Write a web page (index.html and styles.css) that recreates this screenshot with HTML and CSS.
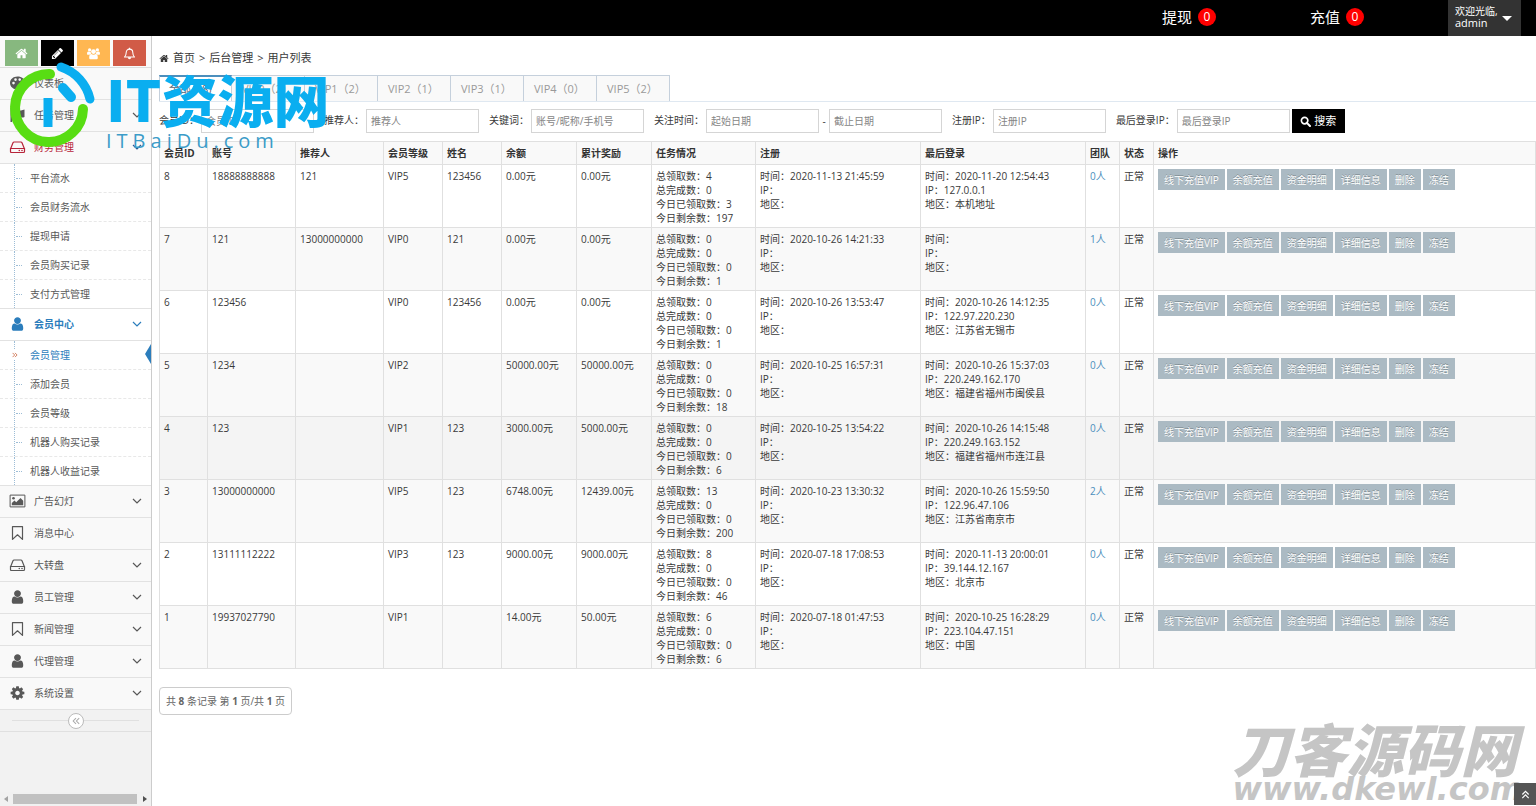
FILE: index.html
```html
<!DOCTYPE html>
<html lang="zh-CN">
<head>
<meta charset="utf-8">
<title>用户列表</title>
<link rel="stylesheet" href="styles.css">
</head>
<body>
<svg class="sprite" aria-hidden="true">
  <symbol id="home" viewBox="0 0 1792 1792"><path d="M1472 992v480q0 26-19 45t-45 19h-384v-384h-256v384h-384q-26 0-45-19t-19-45v-480q0-1 .5-3t.5-3l575-474 575 474q1 2 1 6zm223-69l-62 74q-8 9-21 11h-3q-13 0-21-7l-692-577-692 577q-12 8-24 7-13-2-21-11l-62-74q-8-10-7-23.5t11-21.5l719-599q32-26 76-26t76 26l244 204v-195q0-14 9-23t23-9h192q14 0 23 9t9 23v408l219 182q10 8 11 21.5t-7 23.5z"/></symbol>
  <symbol id="pencil" viewBox="0 0 1792 1792"><path d="M491 1536l91-91-235-235-91 91v107h128v128h107zm523-928q0-22-22-22-10 0-17 7l-542 542q-7 7-7 17 0 22 22 22 10 0 17-7l542-542q7-7 7-17zm-54-192l416 416-832 832h-416v-416zm683 96q0 53-37 90l-166 166-416-416 166-165q36-38 90-38 53 0 91 38l235 234q37 39 37 91z"/></symbol>
  <symbol id="users" viewBox="0 0 16 16"><circle cx="3.2" cy="3.6" r="2"/><circle cx="12.8" cy="3.6" r="2"/><circle cx="8" cy="5.6" r="2.9"/><path d="M0 8.5C0 6.500.8 5.600 1.600 5.600c1 .7 2 .6 2.900.4.100 1.100.400 1.600.8 2.200-.9.100-1.700.500-2.200 1.200H1.300C.4 9.400 0 9.200 0 8.500zM16 8.500c0-2-.8-2.900-1.600-2.900-1 .7-2 .6-2.900.4-.100 1.100-.400 1.600-.8 2.200.9.100 1.700.500 2.200 1.200h1.800c.9 0 1.300-.2 1.300-.9zM2.700 13.200c0-2.700.8-4.400 2.600-4.500 1.700 1.300 3.700 1.300 5.400 0 1.800.1 2.600 1.800 2.600 4.500 0 1.200-.8 1.900-1.900 1.900H4.600c-1.100 0-1.900-.7-1.900-1.900z"/></symbol>
  <symbol id="bell" viewBox="0 0 16 16"><path d="M1.800 12.400C3.700 10.700 4 8.500 4 6.600 4 4.300 5.600 2.600 8 2.600s4 1.700 4 4c0 1.900.3 4.100 2.200 5.800z" fill="none" stroke="currentColor" stroke-width="1.300" stroke-linejoin="round"/><path d="M7.200 1h1.600v2H7.200zM6 12.600h4c0 1.500-.9 2.400-2 2.400s-2-.9-2-2.400z"/></symbol>
  <symbol id="palette" viewBox="0 0 16 16"><path fill-rule="evenodd" d="M8 1.500c4.300 0 7.500 2.500 7.500 5.800 0 2.200-1.500 3.300-3.300 3.300-1.900 0-2.900.3-2.500 1.600.5 1.400-.2 2.300-1.700 2.300C3.800 14.500.5 11.600.5 8S3.700 1.500 8 1.500zM4 6.800a1.300 1.300 0 100 2.600 1.300 1.300 0 000-2.600zm2-3.500a1.300 1.300 0 100 2.600 1.300 1.300 0 000-2.600zm4.200 0a1.300 1.300 0 100 2.600 1.300 1.300 0 000-2.600zm2.600 2.700a1.200 1.200 0 100 2.400 1.200 1.200 0 000-2.400z"/></symbol>
  <symbol id="flag" viewBox="0 0 16 16"><path d="M1 1h1.500v14H1zM3.500 3c3-2 5 1 8 .5L15 2.500V10c-4 2-6-2-11.500.5z"/></symbol>
  <symbol id="disk" viewBox="0 0 16 16"><path d="M1.200 9.500L3.500 3.700Q3.800 3 4.600 3h6.800q.8 0 1.100.7l2.300 5.800M1 9.500h14v3q0 1-1 1H2q-1 0-1-1z" fill="none" stroke="currentColor" stroke-width="1.200"/><circle cx="9.800" cy="11.500" r=".8"/><circle cx="12.500" cy="11.500" r=".8"/></symbol>
  <symbol id="user" viewBox="0 0 1792 1792"><path d="M1536 1399q0 109-62.500 187t-150.500 78h-854q-88 0-150.500-78t-62.500-187q0-85 8.500-160.500t31.500-152 58.500-131 94-89 134.500-34.500q131 128 313 128t313-128q76 0 134.500 34.500t94 89 58.500 131 31.500 152 8.500 160.500zm-256-887q0 159-112.500 271.500t-271.500 112.500-271.500-112.500-112.500-271.500 112.500-271.500 271.500-112.500 271.500 112.500 112.500 271.500z"/></symbol>
  <symbol id="picture" viewBox="0 0 16 16"><path d="M.6 2.100h14.800v11.800H.6z" fill="none" stroke="currentColor" stroke-width="1"/><circle cx="4" cy="5.300" r="1.300"/><path d="M2.300 12.200V10L5 7.500l1.700 1.700L11 5l2.700 2.700v4.500z"/></symbol>
  <symbol id="bookmark" viewBox="0 0 16 16"><path d="M3 1.600h10v12.800l-5-4.600-5 4.600z" fill="none" stroke="currentColor" stroke-width="1.200" stroke-linejoin="round"/></symbol>
  <symbol id="cog" viewBox="0 0 1792 1792"><path d="M1152 896q0-106-75-181t-181-75-181 75-75 181 75 181 181 75 181-75 75-181zm512-109v222q0 12-8 23t-20 13l-185 28q-19 54-39 91 35 50 107 138 10 12 10 25t-9 23q-27 37-99 108t-94 71q-12 0-26-9l-138-108q-44 23-91 38-16 136-29 186-7 28-36 28h-222q-14 0-24.500-8.500t-11.500-21.500l-28-184q-49-16-90-37l-141 107q-10 9-25 9-14 0-25-11-126-114-165-168-7-10-7-23 0-12 8-23 15-21 51-66.500t54-70.500q-27-50-41-99l-183-27q-13-2-21-12.500t-8-23.500v-222q0-12 8-23t19-13l186-28q14-46 39-92-40-57-107-138-10-12-10-24 0-10 9-23 26-36 98.500-107.500t94.500-71.500q13 0 26 10l138 107q44-23 91-38 16-136 29-186 7-28 36-28h222q14 0 24.500 8.500t11.500 21.500l28 184q49 16 90 37l142-107q9-9 24-9 13 0 25 10 129 119 165 170 7 8 7 22 0 12-8 23-15 21-51 66.500t-54 70.500q26 50 41 98l183 28q13 2 21 12.500t8 23.500z"/></symbol>
  <symbol id="down" viewBox="0 0 10 10"><path d="M1 3l4 4 4-4" fill="none" stroke="currentColor" stroke-width="1.200"/></symbol>
  <symbol id="double" viewBox="0 0 10 10"><path d="M1 1.500L4.500 5 1 8.500M5 1.500L8.500 5 5 8.500" fill="none" stroke="currentColor" stroke-width="1.300"/></symbol>
  <symbol id="search" viewBox="0 0 16 16"><circle cx="6.700" cy="6.700" r="4.700" fill="none" stroke="currentColor" stroke-width="2.400"/><path d="M10 10l4.500 4.500" stroke="currentColor" stroke-width="3" stroke-linecap="round"/></symbol>
</svg>

<header class="topbar">
  <a class="top-link withdraw" href="#">提现 <span class="count">0</span></a>
  <a class="top-link recharge" href="#">充值 <span class="count">0</span></a>
  <button class="account" type="button"><span class="welcome"><small>欢迎光临,</small>admin</span><span class="caret"></span></button>
</header>

<div class="layout">
  <aside class="sidebar">
    <div class="shortcuts">
      <button class="green" type="button" aria-label="首页"><svg><use href="#home"/></svg></button>
      <button class="black" type="button" aria-label="编辑"><svg><use href="#pencil"/></svg></button>
      <button class="orange" type="button" aria-label="会员"><svg><use href="#users"/></svg></button>
      <button class="red" type="button" aria-label="通知"><svg><use href="#bell"/></svg></button>
    </div>
    <nav>
      <a class="item" href="#"><svg class="ico"><use href="#palette"/></svg><span>仪表板</span></a>
      <a class="item" href="#"><svg class="ico"><use href="#flag"/></svg><span>任务管理</span><svg class="chev"><use href="#down"/></svg></a>
      <a class="item finance" href="#"><svg class="ico"><use href="#disk"/></svg><span>财务管理</span><svg class="chev"><use href="#down"/></svg></a>
      <div class="submenu">
        <a href="#">平台流水</a>
        <a href="#">会员财务流水</a>
        <a href="#">提现申请</a>
        <a href="#">会员购买记录</a>
        <a href="#">支付方式管理</a>
      </div>
      <a class="item open" href="#"><svg class="ico"><use href="#user"/></svg><span>会员中心</span><svg class="chev"><use href="#down"/></svg></a>
      <div class="submenu">
        <a class="current" href="#"><svg class="mark"><use href="#double"/></svg>会员管理</a>
        <a href="#">添加会员</a>
        <a href="#">会员等级</a>
        <a href="#">机器人购买记录</a>
        <a href="#">机器人收益记录</a>
      </div>
      <a class="item" href="#"><svg class="ico"><use href="#picture"/></svg><span>广告幻灯</span><svg class="chev"><use href="#down"/></svg></a>
      <a class="item" href="#"><svg class="ico"><use href="#bookmark"/></svg><span>消息中心</span></a>
      <a class="item" href="#"><svg class="ico"><use href="#disk"/></svg><span>大转盘</span><svg class="chev"><use href="#down"/></svg></a>
      <a class="item" href="#"><svg class="ico"><use href="#user"/></svg><span>员工管理</span><svg class="chev"><use href="#down"/></svg></a>
      <a class="item" href="#"><svg class="ico"><use href="#bookmark"/></svg><span>新闻管理</span><svg class="chev"><use href="#down"/></svg></a>
      <a class="item" href="#"><svg class="ico"><use href="#user"/></svg><span>代理管理</span><svg class="chev"><use href="#down"/></svg></a>
      <a class="item" href="#"><svg class="ico"><use href="#cog"/></svg><span>系统设置</span><svg class="chev"><use href="#down"/></svg></a>
    </nav>
    <div class="collapse"><button type="button" aria-label="收起菜单"><svg><use href="#double"/></svg></button></div>
    <div class="hscroll"><i class="arrow left"></i><i class="thumb"></i><i class="arrow right"></i></div>
  </aside>

  <main class="content">
    <div class="breadcrumb"><svg><use href="#home"/></svg><a href="#">首页</a><span>&gt;</span><a href="#">后台管理</a><span>&gt;</span><span>用户列表</span></div>
    <div class="tabs">
      <a class="active" href="#">全部（8)</a><a href="#">VIP0（2）</a><a href="#">VIP1（2）</a><a href="#">VIP2（1）</a><a href="#">VIP3（1）</a><a href="#">VIP4（0）</a><a href="#">VIP5（2）</a>
    </div>
    <form class="filters">
      <div class="field"><label for="f-id">会员ID：</label><input id="f-id" type="text" placeholder="会员ID"></div>
      <div class="field"><label for="f-ref">推荐人：</label><input id="f-ref" type="text" placeholder="推荐人"></div>
      <div class="field"><label for="f-key">关键词：</label><input id="f-key" type="text" placeholder="账号/昵称/手机号"></div>
      <div class="field"><label for="f-from">关注时间：</label><input id="f-from" type="text" placeholder="起始日期"><span class="dash">-</span><input type="text" placeholder="截止日期" aria-label="截止日期"></div>
      <div class="field"><label for="f-ip">注册IP：</label><input id="f-ip" type="text" placeholder="注册IP"></div>
      <div class="field"><label for="f-last">最后登录IP：</label><input id="f-last" type="text" placeholder="最后登录IP"><button type="button"><svg><use href="#search"/></svg>搜索</button></div>
    </form>

    <table class="members">
      <colgroup><col class="c-id"><col class="c-account"><col class="c-account"><col class="c-level"><col class="c-name"><col class="c-money"><col class="c-money"><col class="c-task"><col class="c-login"><col class="c-login"><col class="c-team"><col class="c-state"><col></colgroup>
      <thead>
        <tr><th>会员ID</th><th>账号</th><th>推荐人</th><th>会员等级</th><th>姓名</th><th>余额</th><th>累计奖励</th><th>任务情况</th><th>注册</th><th>最后登录</th><th>团队</th><th>状态</th><th>操作</th></tr>
      </thead>
      <tbody>
        <tr><td>8</td><td>18888888888</td><td>121</td><td>VIP5</td><td>123456</td><td>0.00元</td><td>0.00元</td><td>总领取数：4<br>总完成数：0<br>今日已领取数：3<br>今日剩余数：197</td><td>时间：2020-11-13 21:45:59<br>IP：<br>地区：</td><td>时间：2020-11-20 12:54:43<br>IP：127.0.0.1<br>地区：本机地址</td><td><a href="#">0人</a></td><td>正常</td><td><div class="actions"><button type="button">线下充值VIP</button><button type="button">余额充值</button><button type="button">资金明细</button><button type="button">详细信息</button><button type="button">删除</button><button type="button">冻结</button></div></td></tr>
        <tr><td>7</td><td>121</td><td>13000000000</td><td>VIP0</td><td>121</td><td>0.00元</td><td>0.00元</td><td>总领取数：0<br>总完成数：0<br>今日已领取数：0<br>今日剩余数：1</td><td>时间：2020-10-26 14:21:33<br>IP：<br>地区：</td><td>时间：<br>IP：<br>地区：</td><td><a href="#">1人</a></td><td>正常</td><td><div class="actions"><button type="button">线下充值VIP</button><button type="button">余额充值</button><button type="button">资金明细</button><button type="button">详细信息</button><button type="button">删除</button><button type="button">冻结</button></div></td></tr>
        <tr><td>6</td><td>123456</td><td></td><td>VIP0</td><td>123456</td><td>0.00元</td><td>0.00元</td><td>总领取数：0<br>总完成数：0<br>今日已领取数：0<br>今日剩余数：1</td><td>时间：2020-10-26 13:53:47<br>IP：<br>地区：</td><td>时间：2020-10-26 14:12:35<br>IP：122.97.220.230<br>地区：江苏省无锡市</td><td><a href="#">0人</a></td><td>正常</td><td><div class="actions"><button type="button">线下充值VIP</button><button type="button">余额充值</button><button type="button">资金明细</button><button type="button">详细信息</button><button type="button">删除</button><button type="button">冻结</button></div></td></tr>
        <tr><td>5</td><td>1234</td><td></td><td>VIP2</td><td></td><td>50000.00元</td><td>50000.00元</td><td>总领取数：0<br>总完成数：0<br>今日已领取数：0<br>今日剩余数：18</td><td>时间：2020-10-25 16:57:31<br>IP：<br>地区：</td><td>时间：2020-10-26 15:37:03<br>IP：220.249.162.170<br>地区：福建省福州市闽侯县</td><td><a href="#">0人</a></td><td>正常</td><td><div class="actions"><button type="button">线下充值VIP</button><button type="button">余额充值</button><button type="button">资金明细</button><button type="button">详细信息</button><button type="button">删除</button><button type="button">冻结</button></div></td></tr>
        <tr class="hovered"><td>4</td><td>123</td><td></td><td>VIP1</td><td>123</td><td>3000.00元</td><td>5000.00元</td><td>总领取数：0<br>总完成数：0<br>今日已领取数：0<br>今日剩余数：6</td><td>时间：2020-10-25 13:54:22<br>IP：<br>地区：</td><td>时间：2020-10-26 14:15:48<br>IP：220.249.163.152<br>地区：福建省福州市连江县</td><td><a href="#">0人</a></td><td>正常</td><td><div class="actions"><button type="button">线下充值VIP</button><button type="button">余额充值</button><button type="button">资金明细</button><button type="button">详细信息</button><button type="button">删除</button><button type="button">冻结</button></div></td></tr>
        <tr><td>3</td><td>13000000000</td><td></td><td>VIP5</td><td>123</td><td>6748.00元</td><td>12439.00元</td><td>总领取数：13<br>总完成数：0<br>今日已领取数：0<br>今日剩余数：200</td><td>时间：2020-10-23 13:30:32<br>IP：<br>地区：</td><td>时间：2020-10-26 15:59:50<br>IP：122.96.47.106<br>地区：江苏省南京市</td><td><a href="#">2人</a></td><td>正常</td><td><div class="actions"><button type="button">线下充值VIP</button><button type="button">余额充值</button><button type="button">资金明细</button><button type="button">详细信息</button><button type="button">删除</button><button type="button">冻结</button></div></td></tr>
        <tr><td>2</td><td>13111112222</td><td></td><td>VIP3</td><td>123</td><td>9000.00元</td><td>9000.00元</td><td>总领取数：8<br>总完成数：0<br>今日已领取数：0<br>今日剩余数：46</td><td>时间：2020-07-18 17:08:53<br>IP：<br>地区：</td><td>时间：2020-11-13 20:00:01<br>IP：39.144.12.167<br>地区：北京市</td><td><a href="#">0人</a></td><td>正常</td><td><div class="actions"><button type="button">线下充值VIP</button><button type="button">余额充值</button><button type="button">资金明细</button><button type="button">详细信息</button><button type="button">删除</button><button type="button">冻结</button></div></td></tr>
        <tr><td>1</td><td>19937027790</td><td></td><td>VIP1</td><td></td><td>14.00元</td><td>50.00元</td><td>总领取数：6<br>总完成数：0<br>今日已领取数：0<br>今日剩余数：6</td><td>时间：2020-07-18 01:47:53<br>IP：<br>地区：</td><td>时间：2020-10-25 16:28:29<br>IP：223.104.47.151<br>地区：中国</td><td><a href="#">0人</a></td><td>正常</td><td><div class="actions"><button type="button">线下充值VIP</button><button type="button">余额充值</button><button type="button">资金明细</button><button type="button">详细信息</button><button type="button">删除</button><button type="button">冻结</button></div></td></tr>
      </tbody>
    </table>
    <div class="pager">共 <b>8</b> 条记录 第 <b>1</b> 页/共 <b>1</b> 页</div>
  </main>
</div>

<div class="stamp stamp-top">
  <svg viewBox="0 0 100 100">
    <path d="M44 22A34 34 0 1 0 77 57" stroke="#58dd13" stroke-width="10" stroke-linecap="round"/>
    <path d="M55 15A44 44 0 0 1 84 47" stroke="#0aaef0" stroke-width="9" stroke-linecap="round"/>
    <path d="M57 36L65 45" stroke="#0aaef0" stroke-width="10" stroke-linecap="round"/>
    <path d="M42 46v29" stroke="#0aaef0" stroke-width="9"/>
  </svg>
  <div class="stamp-words"><strong>IT资源网</strong><span>ITBaiDu.com</span></div>
</div>
<div class="stamp stamp-bottom"><strong>刀客源码网</strong><span>www.dkewl.com</span></div>
<button class="to-top" type="button" aria-label="回到顶部"><svg><use href="#double"/></svg></button>
</body>
</html>
```

FILE: styles.css
```css
* { box-sizing: border-box; }

body {
  margin: 0;
  min-height: 100vh;
  display: flex;
  flex-direction: column;
  position: relative;
  overflow-x: hidden;
  background: #fff;
  color: #393939;
  font: 10px/14px "Open Sans", "Noto Sans CJK SC", sans-serif;
}

a { color: inherit; text-decoration: none; }
button, input { font: inherit; border: 0; border-radius: 0; padding: 0; }
svg { fill: currentColor; flex: none; }
.sprite { position: absolute; width: 0; height: 0; }

/* Top bar */
.topbar {
  height: 36px;
  display: flex;
  justify-content: flex-end;
  align-items: center;
  padding-right: 15px;
  background: #000;
  color: #fff;
}
.top-link { display: flex; align-items: center; gap: 6px; height: 36px; padding-bottom: 2px; font-size: 15px; }
.withdraw { margin-right: 94px; }
.recharge { margin-right: 84px; }
.count {
  width: 18px;
  height: 18px;
  border-radius: 50%;
  background: #f00;
  font-size: 12px;
  line-height: 18px;
  text-align: center;
}
.account {
  width: 73px;
  height: 36px;
  display: flex;
  align-items: center;
  gap: 4px;
  padding-left: 7px;
  background: #333;
  color: #fff;
  text-align: left;
}
.welcome { padding-bottom: 2px; font-size: 11px; line-height: 12px; white-space: nowrap; }
.welcome small { display: block; font-size: 10px; }
.caret { border: 5px solid transparent; border-top-color: #fff; border-bottom: 0; }

/* Side menu */
.layout { flex: 1; display: flex; }
.sidebar {
  width: 152px;
  flex: none;
  display: flex;
  flex-direction: column;
  border-right: 1px solid #ccc;
  background: #f2f2f2;
  color: #585858;
}
.shortcuts {
  display: flex;
  gap: 3px;
  padding: 4px 5px 1px;
  border-bottom: 1px solid #ddd;
  background: #fafafa;
}
.shortcuts button { flex: 1; height: 26px; display: grid; place-items: center; color: #fff; }
.shortcuts svg { width: 13px; height: 13px; }
.shortcuts .green { background: #87b87f; }
.shortcuts .black { background: #000; }
.shortcuts .orange { background: #ffb752; }
.shortcuts .red { background: #d15b47; }

.item {
  height: 32px;
  display: flex;
  align-items: center;
  padding: 0 9px 1px;
  border-bottom: 1px solid #e2e2e2;
  background: #f9f9f9;
}
.ico { width: 17px; height: 16px; margin-right: 8px; }
.chev { width: 10px; height: 10px; margin-left: auto; }
.finance { color: #b7243a; }
.finance .chev { color: #2b5d92; }
.open { background: #fff; color: #2b7dbc; font-weight: 700; }
.submenu { background: #fff; border-bottom: 1px solid #e2e2e2; }
.submenu a {
  height: 29px;
  display: flex;
  align-items: center;
  position: relative;
  padding-left: 30px;
  border-bottom: 1px dashed #e8e8e8;
}
.submenu a:last-child { height: 28px; border-bottom: 0; }
.submenu a::before {
  content: "";
  position: absolute;
  left: 14px;
  top: 0;
  bottom: 0;
  border-left: 1px dotted #9dbdd6;
}
.submenu a::after {
  content: "";
  position: absolute;
  left: 16px;
  top: 14px;
  width: 6px;
  border-top: 1px dotted #9dbdd6;
}
.submenu .current { color: #2b7dbc; }
.submenu .current::after {
  left: auto;
  right: 0;
  top: 3px;
  width: 0;
  border: 10px solid transparent;
  border-right: 6px solid #2b7dbc;
  border-left: 0;
}
.mark { position: absolute; left: 11px; top: 9px; width: 8px; height: 10px; padding: 1px; background: #fff; color: #c86139; }

.collapse {
  height: 22px;
  display: flex;
  align-items: center;
  padding: 0 12px;
  border-bottom: 1px solid #e0e0e0;
}
.collapse::before, .collapse::after { content: ""; flex: 1; border-top: 1px solid #e0e0e0; }
.collapse button {
  width: 16px;
  height: 16px;
  display: grid;
  place-items: center;
  border: 1px solid #bbb;
  border-radius: 50%;
  background: #fff;
  color: #aaa;
}
.collapse svg { width: 8px; height: 8px; transform: rotate(180deg); }
.hscroll {
  height: 14px;
  margin-top: auto;
  display: flex;
  align-items: center;
  justify-content: space-between;
  padding: 0 4px;
  background: #f1f1f1;
}
.thumb { flex: 1; height: 10px; margin: 0 6px 0 5px; background: #c1c1c1; }
.arrow { border: 3px solid transparent; }
.arrow.left { border-right: 4px solid #a3a3a3; border-left: 0; }
.arrow.right { border-left: 4px solid #505050; border-right: 0; }

/* Content */
.content { flex: 1; min-width: 0; padding: 15px 0 0 7px; }
.breadcrumb { display: flex; align-items: center; gap: 4px; font-size: 11px; }
.breadcrumb svg { width: 10px; height: 11px; }
.tabs {
  display: flex;
  margin-top: 10px;
  border-bottom: 1px solid #dfe8f1;
  color: #999;
  font-size: 11px;
}
.tabs a {
  width: 73px;
  height: 26px;
  padding: 6px 0 0 10px;
  border: 1px solid #c5d0dc;
  border-bottom: 0;
  border-left: 0;
  background: #f9f9f9;
  white-space: nowrap;
}
.tabs .active {
  padding: 5px 0 0 9px;
  border-top: 2px solid #4c8fbd;
  border-left: 1px solid #c5d0dc;
  background: #fff;
  color: #576373;
}

.filters { display: flex; gap: 10px; margin-top: 7px; }
.field { display: flex; align-items: center; white-space: nowrap; }
.field label { margin-right: 2px; padding-bottom: 2px; }
.field input { width: 113px; height: 24px; padding: 0 4px; border: 1px solid #d5d5d5; background: #fff; color: #393939; }
.field input::placeholder { color: #858585; }
.dash { width: 10px; text-align: center; }
.field button {
  width: 53px;
  height: 24px;
  margin-left: 2px;
  display: flex;
  align-items: center;
  justify-content: center;
  gap: 3px;
  background: #000;
  color: #fff;
  font-size: 11px;
}
.field button svg { width: 11px; height: 11px; }

.members { width: 100%; margin-top: 8px; table-layout: fixed; border-collapse: collapse; }
.members th, .members td { padding: 4px 4px 2px; border: 1px solid #e0e0e0; text-align: left; vertical-align: top; white-space: nowrap; }
.members th { padding: 4px; background: #f9f9f9; color: #333; font-weight: 700; }
.members tbody tr:nth-child(even) { background: #f9f9f9; }
.members tbody .hovered { background: #f4f4f4; }
.members td a { color: #4c8fbd; }
.c-id { width: 48px; }
.c-account { width: 88px; }
.c-level, .c-name { width: 59px; }
.c-money { width: 75px; }
.c-task { width: 104px; }
.c-login { width: 165px; }
.c-team { width: 34px; }
.c-state { width: 34px; }
.actions { display: flex; gap: 2px; }
.actions button {
  height: 21px;
  padding: 0 6px;
  background: #abbac3;
  color: #fff;
  text-shadow: 0 -1px 0 rgba(0, 0, 0, 0.25);
}

.pager {
  width: fit-content;
  margin-top: 18px;
  padding: 6px;
  border: 1px solid #ccc;
  border-radius: 4px;
  color: #666;
}

/* Overlaid marks */
.stamp { position: absolute; display: flex; pointer-events: none; white-space: nowrap; }
.stamp strong { font-family: "Noto Sans CJK SC", sans-serif; font-weight: 900; }
.stamp-top { left: 6px; top: 52px; color: #0aaef0; }
.stamp-top svg { width: 100px; height: 100px; fill: none; }
.stamp-words { display: flex; flex-direction: column; padding-top: 15px; }
.stamp-words strong { font-size: 56px; line-height: 61px; }
.stamp-words span { color: #3c9cc8; font-size: 20px; line-height: 26px; letter-spacing: 5px; }
.stamp-bottom { right: 13px; top: 719px; flex-direction: column; color: #c5c5c5; font-style: italic; }
.stamp-bottom strong { font-size: 57px; line-height: 57px; }
.stamp-bottom span { font: italic 700 32px/26px "DejaVu Sans", sans-serif; }
.to-top {
  position: fixed;
  right: 0;
  bottom: 1px;
  width: 22px;
  height: 22px;
  display: grid;
  place-items: center;
  background: #555;
  color: #fff;
}
.to-top svg { width: 9px; height: 9px; transform: rotate(-90deg); }
```
